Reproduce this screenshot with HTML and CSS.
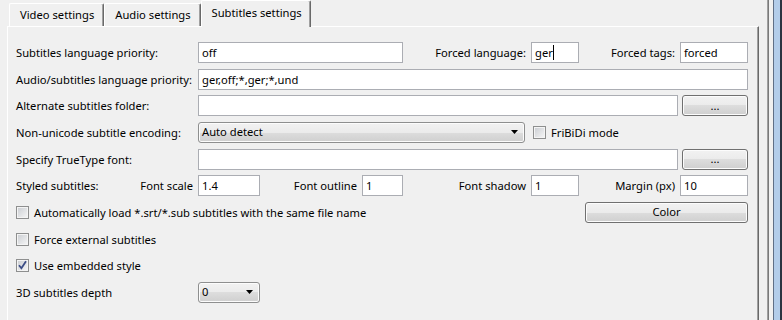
FILE: index.html
```html
<!DOCTYPE html>
<html lang="en">
<head>
  <meta charset="UTF-8" />
  <meta name="viewport" content="width=device-width, initial-scale=1.0"/>
  <link rel="stylesheet" href="styles.css">
</head>
<body>

  <div class="dialog">
    <div class="tabs">
      <div class="tab">Video settings</div>
      <div class="tab">Audio settings</div>
      <div class="tab active">Subtitles settings</div>
    </div>

    <div class="pane">
      <div class="form">
        <!-- row 1 -->
        <span class="lbl label-col">Subtitles language priority:</span>
        <div class="field lang-field">off</div>
        <span class="lbl right">Forced language:</span>
        <div class="field">ger<span class="caret"></span></div>
        <span class="lbl right">Forced tags:</span>
        <div class="field">forced</div>

        <!-- row 2 -->
        <span class="lbl label-col">Audio/subtitles language priority:</span>
        <div class="field full-field">ger,off;*,ger;*,und</div>

        <!-- row 3 -->
        <span class="lbl label-col">Alternate subtitles folder:</span>
        <div class="field path-field"></div>
        <div class="btn browse">...</div>

        <!-- row 4 -->
        <span class="lbl label-col">Non-unicode subtitle encoding:</span>
        <div class="combo encoding">
          <span>Auto detect</span>
          <svg width="7" height="4" viewBox="0 0 7 4"><polygon points="0,0 7,0 3.5,4" fill="#000"/></svg>
        </div>
        <label class="check fribidi"><span class="box"></span>FriBiDi mode</label>

        <!-- row 5 -->
        <span class="lbl label-col">Specify TrueType font:</span>
        <div class="field path-field"></div>
        <div class="btn browse">...</div>

        <!-- row 6 -->
        <span class="lbl">Styled subtitles:</span>
        <span class="lbl right">Font scale</span>
        <div class="field">1.4</div>
        <span class="lbl right">Font outline</span>
        <div class="field">1</div>
        <span class="lbl right">Font shadow</span>
        <div class="field">1</div>
        <span class="lbl right">Margin (px)</span>
        <div class="field">10</div>

        <!-- row 7 -->
        <label class="check auto-load"><span class="box"></span>Automatically load *.srt/*.sub subtitles with the same file name</label>
        <div class="btn color-btn">Color</div>

        <!-- row 8 -->
        <label class="check whole-row"><span class="box"></span>Force external subtitles</label>

        <!-- row 9 -->
        <label class="check whole-row">
          <span class="box">
            <svg width="11" height="11" viewBox="0 0 11 11"><path d="M2 5.2 L4.4 8.2 L9 1.2" fill="none" stroke="#3c4d86" stroke-width="1.8"/></svg>
          </span>Use embedded style</label>

        <!-- row 10 -->
        <span class="lbl label-col">3D subtitles depth</span>
        <div class="combo">
          <span>0</span>
          <svg width="7" height="4" viewBox="0 0 7 4"><polygon points="0,0 7,0 3.5,4" fill="#000"/></svg>
        </div>
      </div>
    </div>
  </div>

  <div class="frame"></div>

</body>
</html>
```

FILE: styles.css
```css
* {
  margin: 0;
  padding: 0;
  box-sizing: border-box;
}

html, body {
  width: 100%;
  height: 100%;
  overflow: hidden;
}

body {
  display: flex;
  background: #f0f0f0;
  color: #000;
  font-family: "Noto Sans", "Open Sans", sans-serif;
  font-size: 11.2px;
}

.dialog {
  width: 759px;
  display: flex;
  flex-direction: column;
}

/* tabs */

.tabs {
  height: 26px;
  display: flex;
  align-items: flex-end;
  padding-left: 9px;
}

.tab {
  height: 23px;
  display: flex;
  align-items: center;
  padding: 0 9px 1px 10px;
  border-top: 1px solid #fff;
  border-left: 1px solid #fff;
  border-right: 1px solid #696969;
  box-shadow: inset -1px 0 #a0a0a0;
  border-radius: 2px 2px 0 0;
  white-space: nowrap;
}

.tab.active {
  height: 27px;
  margin-bottom: -1px;
  padding: 0 8px 3px 10px;
  position: relative;
  background: #f0f0f0;
}

.pane {
  flex: 1;
  margin-left: 7px;
  border-top: 1px solid #fff;
  border-left: 1px solid #fff;
  border-right: 1px solid #696969;
  box-shadow: inset -1px 0 #a0a0a0;
  padding: 15px 0 0 8px;
}

/* form grid */

.form {
  display: grid;
  grid-template-columns: 124px 58px 62px 102px 41px 128px 48px 101px 68px;
  grid-auto-rows: 21px;
  row-gap: 5.67px;
  align-items: center;
}

.lbl {
  white-space: nowrap;
}

.right {
  text-align: right;
  padding-right: 5px;
}

.label-col {
  grid-column: 1 / 3;
}

.lang-field {
  grid-column: 3 / 6;
}

.full-field {
  grid-column: 3 / 10;
}

.path-field {
  grid-column: 3 / 9;
  margin-right: 2px;
}

.browse {
  margin-left: 2px;
}

.encoding {
  grid-column: 3 / 7;
  margin-right: 6px;
}

.fribidi {
  grid-column: 7 / 10;
  margin-left: 2px;
  gap: 3px;
}

.auto-load {
  grid-column: 1 / 8;
}

.color-btn {
  grid-column: 8 / 10;
  margin-left: 6px;
}

.whole-row {
  grid-column: 1 / 10;
}

/* controls */

.field {
  height: 21px;
  border: 1px solid #abadb3;
  background: #fff;
  padding-left: 3px;
  line-height: 19px;
  white-space: nowrap;
  overflow: hidden;
}

.caret {
  display: inline-block;
  width: 1px;
  height: 15px;
  background: #000;
  vertical-align: -3px;
}

.btn,
.combo {
  height: 21px;
  border: 1px solid #707070;
  border-radius: 3px;
  background: linear-gradient(#f2f2f2, #ebebeb 50%, #dddddd 50%, #cfcfcf);
  box-shadow: inset 0 0 0 1px #fcfcfc;
  display: flex;
  align-items: center;
}

.btn {
  justify-content: center;
  padding-bottom: 1px;
}

.combo {
  justify-content: space-between;
  padding: 0 6px 1px 3px;
  border-color: #8e8f8f;
}

.check {
  display: flex;
  align-items: center;
  gap: 5px;
  white-space: nowrap;
}

.box {
  width: 13px;
  height: 13px;
  flex: none;
  border: 1px solid #8e8f8f;
  background: linear-gradient(135deg, #c9ccd1, #f7f7f7);
  box-shadow: inset 0 0 0 1px #f4f4f4;
  display: flex;
  align-items: center;
  justify-content: center;
}

/* window edge on the right */

.frame {
  width: 23px;
  background: linear-gradient(to right,
    #f0f0f0 0 8px,
    #a0a0a0 8px 9px,
    #7a7a7a 9px 10px,
    #f0f0f0 10px 14px,
    #5f6f86 14px 15px,
    #b3cdea 15px 21px,
    #2b3440 21px 23px);
}
```
